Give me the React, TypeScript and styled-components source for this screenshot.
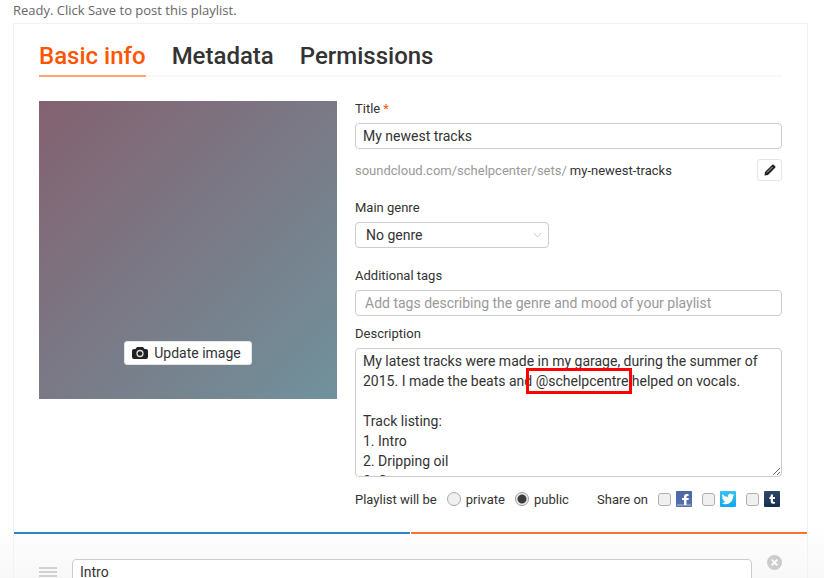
import React, { useState } from "react";
import styled, { createGlobalStyle } from "styled-components";

const GlobalStyle = createGlobalStyle`
  *, *::before, *::after { box-sizing: border-box; }
  body { margin: 0; background: #fff; }
  body, input, button, select, textarea {
    font-family: Roboto, "Open Sans", "Liberation Sans", sans-serif;
    color: #333;
  }
`;

const Page = styled.main`
  height: 100vh;
  overflow: hidden;
  padding: 0 16px 0 13px;
  background: linear-gradient(to top, #f8f8f8, #fff 56px);
`;

const Status = styled.p`
  margin: 0;
  height: 23px;
  font-family: "Open Sans", sans-serif;
  font-size: 13px;
  line-height: 20px;
  color: #666;
`;

const Panel = styled.section`
  border: 1px solid #f2f2f2;
`;

const Editor = styled.form`
  padding: 16px 25px 24px;
`;

const Tabs = styled.nav`
  display: flex;
  gap: 26px;
  margin-bottom: 24px;
  box-shadow: inset 0 -2px #f8f8f8;
`;

const Tab = styled.a<{ $active?: boolean }>`
  padding-bottom: 3px;
  border-bottom: 2px solid ${(p) => (p.$active ? "#ffa473" : "transparent")};
  color: ${(p) => (p.$active ? "#f50" : "#333")};
  font-size: 24px;
  font-weight: 500;
  line-height: 32px;
  text-decoration: none;
`;

const Columns = styled.div`
  display: grid;
  grid-template-columns: 298px minmax(0, 1fr);
  align-items: start;
  gap: 18px;
`;

const Artwork = styled.div`
  display: flex;
  align-items: flex-end;
  justify-content: center;
  aspect-ratio: 1;
  padding-bottom: 34px;
  background: linear-gradient(135deg, #846170, #70929c);
`;

const UpdateButton = styled.button`
  display: flex;
  align-items: center;
  gap: 6px;
  height: 24px;
  padding: 0 10px 0 7px;
  border: 1px solid #e5e5e5;
  border-radius: 3px;
  background: #fff;
  font-size: 14px;
`;

const Fields = styled.div`
  display: flex;
  flex-direction: column;
`;

const Label = styled.label`
  height: 22px;
  font-size: 13px;
  line-height: 16px;
`;

const Required = styled.span`
  margin-left: 3px;
  color: #f50;
`;

const TextInput = styled.input`
  width: 100%;
  height: 26px;
  padding: 0 7px;
  border: 1px solid #ccc;
  border-radius: 4px;
  background: #fff;
  font-size: 14px;
`;

const TagInput = styled(TextInput)`
  margin-bottom: 10px;
  padding: 0 9px;
  &::placeholder { color: #999; opacity: 1; }
`;

const Permalink = styled.div`
  display: flex;
  align-items: center;
  gap: 3px;
  margin: 10px 0 19px;
  font-size: 13px;
`;

const Domain = styled.span`
  color: #999;
`;

const EditButton = styled.button`
  display: grid;
  place-items: center;
  width: 25px;
  height: 22px;
  margin-left: auto;
  padding: 0;
  border: 1px solid #e5e5e5;
  border-radius: 3px;
  background: #fff;
`;

const SelectBox = styled.div`
  display: grid;
  align-items: center;
  width: 194px;
  margin-bottom: 20px;
  & > * { grid-area: 1 / 1; }
  & > svg { justify-self: end; margin-right: 7px; pointer-events: none; }
`;

const Select = styled.select`
  appearance: none;
  height: 26px;
  padding: 0 24px 0 10px;
  border: 1px solid #ccc;
  border-radius: 4px;
  background: #fff;
  font-size: 14px;
`;

const DescriptionBox = styled.div`
  position: relative;
  display: flex;
`;

const Description = styled.textarea`
  width: 100%;
  height: 129px;
  padding: 2px 7px;
  border: 1px solid #ccc;
  border-radius: 4px;
  background: #fff;
  font-size: 14px;
  line-height: 20px;
  overflow: hidden;
  resize: vertical;
`;

const Highlight = styled.div`
  position: absolute;
  top: 20px;
  left: 171px;
  width: 106px;
  height: 26px;
  border: 3px solid #f00;
  pointer-events: none;
`;

const Options = styled.div`
  display: flex;
  align-items: center;
  justify-content: space-between;
  height: 18px;
  margin-top: 13px;
  padding-right: 2px;
  font-size: 13px;
`;

const Group = styled.div`
  display: flex;
  align-items: center;
  gap: 10px;
`;

const Choice = styled.label`
  display: flex;
  align-items: center;
  gap: 5px;
`;

const Radio = styled.input`
  appearance: none;
  width: 14px;
  height: 14px;
  margin: 0;
  border: 1px solid #aaa;
  border-radius: 50%;
  background: #f0f0f0;
  &:checked {
    border-color: #999;
    background: radial-gradient(circle, #3c3c3c 4px, #f0f0f0 5px);
  }
`;

const Checkbox = styled.input`
  appearance: none;
  width: 13px;
  height: 13px;
  margin: 0;
  border: 1px solid #b0b0b0;
  border-radius: 3px;
  background: #f0f0f0;
  &:checked { background: #666; }
`;

const Progress = styled.div`
  display: grid;
  grid-template-columns: 1fr 1fr;
  gap: 1px;
  height: 2px;
`;

const Bar = styled.div<{ $color: string }>`
  background: ${(p) => p.$color};
`;

const Track = styled.div`
  display: grid;
  grid-template-columns: 18px minmax(0, 1fr) 15px;
  column-gap: 15px;
  padding: 25px 25px 12px;
`;

const IconButton = styled.button`
  display: flex;
  align-items: center;
  height: 26px;
  padding: 0;
  border: 0;
  background: none;
`;

const RemoveButton = styled(IconButton)`
  align-items: flex-start;
  margin-top: -4px;
`;

const initialText =
  "My latest tracks were made in my garage, during the summer of 2015. I made the beats and @schelpcentre helped on vocals.\n\nTrack listing:\n1. Intro\n2. Dripping oil\n3. Concrete";

const Camera = () => (
  <svg width="16" height="12" viewBox="0 0 16 12" aria-hidden="true">
    <path fill="#222" d="M5 0h6l1.500 2H14q2 0 2 2v6q0 2-2 2H2q-2 0-2-2V4q0-2 2-2h1.500z" />
    <circle cx="8" cy="6.500" r="3" fill="none" stroke="#ddd" strokeWidth="1.300" />
  </svg>
);

const Pencil = () => (
  <svg width="12" height="12" viewBox="0 0 12 12" aria-hidden="true">
    <path fill="#222" d="M.5 11.500 1 8 8.300.8Q9 .2 9.700.8l1.500 1.500q.6.700 0 1.400L4 11z" />
    <path stroke="#bbb" d="m3 8.500 5.500-5.500" />
  </svg>
);

const Facebook = () => (
  <svg width="16" height="16" viewBox="0 0 16 16" aria-hidden="true">
    <defs>
      <linearGradient id="facebook" x2="0" y2="1">
        <stop stopColor="#4b67a5" />
        <stop offset="1" stopColor="#5470ad" />
      </linearGradient>
    </defs>
    <rect width="16" height="16" rx="1" fill="url(#facebook)" />
    <path fill="#8498c5" d="M1 13h14v2H1z" />
    <path fill="#fff" d="M8 14V9H6V7h2V5.500Q8 3 10.500 3h2v2H11.500q-1 0-1 1v1h2.300l-.3 2h-2v5z" />
  </svg>
);

const Twitter = () => (
  <svg width="16" height="16" viewBox="0 0 16 16" aria-hidden="true">
    <defs>
      <linearGradient id="twitter" x2="0" y2="1">
        <stop stopColor="#35c2f5" />
        <stop offset="1" stopColor="#0fa9ec" />
      </linearGradient>
    </defs>
    <rect width="16" height="16" rx="1" fill="url(#twitter)" />
    <path fill="#fff" transform="translate(1 1) scale(.58)" d="M23 5.100a8.500 8.500 0 0 1-2.500.7 4.500 4.500 0 0 0 2-2.500 9 9 0 0 1-2.900 1.100 4.500 4.500 0 0 0-7.700 4.100A12.800 12.800 0 0 1 2.600 3.800 4.500 4.500 0 0 0 4 9.900a4.500 4.500 0 0 1-2.100-.6c0 2.200 1.600 4.100 3.700 4.500a4.500 4.500 0 0 1-2 .1 4.500 4.500 0 0 0 4.200 3.100A9.100 9.100 0 0 1 1 18.900a12.800 12.800 0 0 0 19.700-11.400A9 9 0 0 0 23 5.100z" />
  </svg>
);

const Tumblr = () => (
  <svg width="16" height="16" viewBox="0 0 16 16" aria-hidden="true">
    <defs>
      <linearGradient id="tumblr" x2="0" y2="1">
        <stop stopColor="#2f4a68" />
        <stop offset="1" stopColor="#15304e" />
      </linearGradient>
    </defs>
    <rect width="16" height="16" rx="1" fill="url(#tumblr)" />
    <path fill="#fff" d="M7 3.500h2V6h2v2H9v2q0 1 1 1h1v1.500q-1 .3-2 .3-2.300 0-2.300-2.300V8H5.300V6.500Q6.800 6 7 3.500z" />
  </svg>
);

const networks = [
  { name: "Facebook", Icon: Facebook },
  { name: "Twitter", Icon: Twitter },
  { name: "Tumblr", Icon: Tumblr },
];

export default function App() {
  const [title, setTitle] = useState("My newest tracks");
  const [description, setDescription] = useState(initialText);
  const [privacy, setPrivacy] = useState("public");
  const [track, setTrack] = useState("Intro");

  return (
    <Page>
      <GlobalStyle />
      <Status>Ready. Click Save to post this playlist.</Status>
      <Panel>
        <Editor onSubmit={(e) => e.preventDefault()}>
          <Tabs>
            <Tab href="#basic" $active>Basic info</Tab>
            <Tab href="#metadata">Metadata</Tab>
            <Tab href="#permissions">Permissions</Tab>
          </Tabs>
          <Columns>
            <Artwork>
              <UpdateButton type="button"><Camera />Update image</UpdateButton>
            </Artwork>
            <Fields>
              <Label htmlFor="title">Title<Required>*</Required></Label>
              <TextInput id="title" value={title} onChange={(e) => setTitle(e.target.value)} />
              <Permalink>
                <Domain>soundcloud.com/schelpcenter/sets/</Domain>
                <span>my-newest-tracks</span>
                <EditButton type="button" aria-label="Edit link"><Pencil /></EditButton>
              </Permalink>
              <Label htmlFor="genre">Main genre</Label>
              <SelectBox>
                <Select id="genre"><option>No genre</option></Select>
                <svg width="9" height="6" viewBox="0 0 9 6" aria-hidden="true">
                  <path d="m1 1 3.500 4L8 1" fill="none" stroke="#ccc" />
                </svg>
              </SelectBox>
              <Label htmlFor="tags">Additional tags</Label>
              <TagInput id="tags" placeholder="Add tags describing the genre and mood of your playlist" />
              <Label htmlFor="description">Description</Label>
              <DescriptionBox>
                <Description id="description" value={description} onChange={(e) => setDescription(e.target.value)} />
                <Highlight />
              </DescriptionBox>
              <Options>
                <Group>
                  <span>Playlist will be</span>
                  {["private", "public"].map((value) => (
                    <Choice key={value}>
                      <Radio type="radio" name="privacy" checked={privacy === value} onChange={() => setPrivacy(value)} />
                      {value}
                    </Choice>
                  ))}
                </Group>
                <Group>
                  <span>Share on</span>
                  {networks.map(({ name, Icon }) => (
                    <Choice key={name}>
                      <Checkbox type="checkbox" aria-label={name} />
                      <Icon />
                    </Choice>
                  ))}
                </Group>
              </Options>
            </Fields>
          </Columns>
        </Editor>
        <Progress>
          <Bar $color="#2a85cf" />
          <Bar $color="#ff7130" />
        </Progress>
        <Track>
          <IconButton type="button" aria-label="Reorder track">
            <svg width="18" height="10" viewBox="0 0 18 10" aria-hidden="true">
              <path d="M0 1h18M0 5h18M0 9h18" stroke="#aaa" />
            </svg>
          </IconButton>
          <TextInput aria-label="Track title" value={track} onChange={(e) => setTrack(e.target.value)} />
          <RemoveButton type="button" aria-label="Remove track">
            <svg width="15" height="15" viewBox="0 0 16 16" aria-hidden="true">
              <circle cx="8" cy="8" r="8" fill="#ccc" />
              <path d="m5 5 6 6m0-6-6 6" stroke="#fff" strokeWidth="2" />
            </svg>
          </RemoveButton>
        </Track>
      </Panel>
    </Page>
  );
}
